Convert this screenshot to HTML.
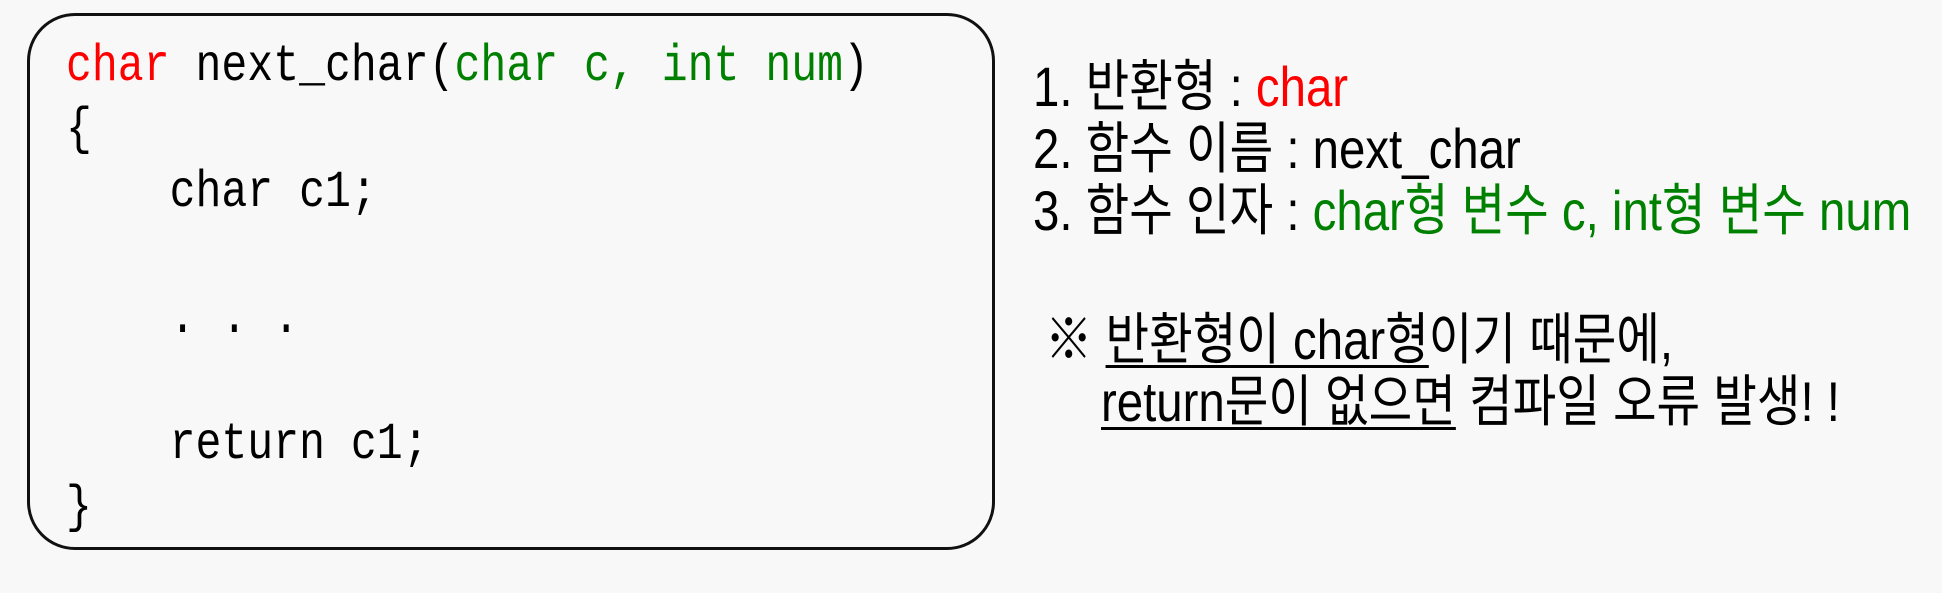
<!DOCTYPE html>
<html><head><meta charset="utf-8"><style>
body{margin:0;width:1942px;height:593px;background:#f8f8f8;position:relative;overflow:hidden}
.box{position:absolute;left:27px;top:13px;width:968px;height:537px;border:3px solid #111;border-radius:48px;box-sizing:border-box}
.code{position:absolute;left:66px;top:0;font-family:"Liberation Mono",monospace;font-size:52px;transform:scaleX(0.83);transform-origin:0 0;white-space:pre;color:#000}
.code div{position:absolute;left:0;white-space:pre;line-height:1}
.r{color:#ff0000}.g{color:#008000}
.t{position:absolute;font-family:"Liberation Sans","Noto Sans CJK KR",sans-serif;font-size:56px;white-space:pre;transform:scaleX(0.846);transform-origin:0 0;line-height:1;color:#000}
u{text-decoration-thickness:3px;text-underline-offset:6px}
</style></head><body>
<div class="box"></div>
<div class="code">
<div style="top:41px"><span class="r">char</span> next_char(<span class="g">char c, int num</span>)</div>
<div style="top:104px">{</div>
<div style="top:167px">    char c1;</div>
<div style="top:293px">    . . .</div>
<div style="top:419px">    return c1;</div>
<div style="top:482px">}</div>
</div>
<div class="t" style="left:1033px;top:59px">1. 반환형 : <span class="r">char</span></div>
<div class="t" style="left:1033px;top:121px">2. 함수 이름 : next_char</div>
<div class="t" style="left:1033px;top:183px">3. 함수 인자 : <span class="g">char형 변수 c, int형 변수 num</span></div>
<div class="t" style="left:1045px;top:312px">※ <u>반환형이 char형</u>이기 때문에,</div>
<div class="t" style="left:1101px;top:374px"><u>return문이 없으면</u> 컴파일 오류 발생! !</div>
</body></html>
